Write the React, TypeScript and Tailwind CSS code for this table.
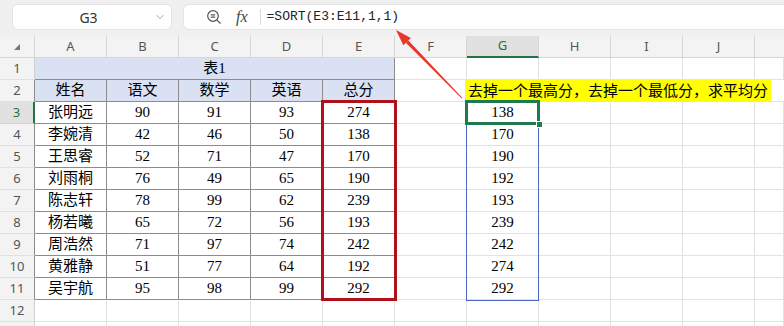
import { ChevronDown } from "lucide-react";

const data: [string, number, number, number, number][] = [
  ["张明远", 90, 91, 93, 274],
  ["李婉清", 42, 46, 50, 138],
  ["王思睿", 52, 71, 47, 170],
  ["刘雨桐", 76, 49, 65, 190],
  ["陈志轩", 78, 99, 62, 239],
  ["杨若曦", 65, 72, 56, 193],
  ["周浩然", 71, 97, 74, 242],
  ["黄雅静", 51, 77, 64, 192],
  ["吴宇航", 95, 98, 99, 292],
];

const sorted = [138, 170, 190, 192, 193, 239, 242, 274, 292];
const letters = ["A", "B", "C", "D", "E", "F", "G", "H", "I", "J"];

const light = "border-r border-b border-[#e2e2e2]";
const dark = "border-r border-b border-[#8c8c8c]";

function RowHead({ n, tone }: { n?: number; tone: "light" | "dark" | "sel" }) {
  if (tone === "sel") {
    return (
      <div className="flex items-center justify-center bg-[#e1e1e1] text-[#217346] text-[13px] font-['Noto_Sans',sans-serif] border-b border-[#d4d4d4] border-r-2 border-r-[#217346]">
        {n}
      </div>
    );
  }
  return (
    <div
      className={
        tone === "dark"
          ? "flex items-center justify-center bg-[#f3f3f3] text-[#555] text-[13px] font-['Noto_Sans',sans-serif] border-b border-[#e0e0e0] border-r border-r-[#8c8c8c]"
          : "flex items-center justify-center bg-[#f3f3f3] text-[#555] text-[13px] font-['Noto_Sans',sans-serif] border-b border-[#e0e0e0] border-r border-r-[#d0d0d0]"
      }
    >
      {n}
    </div>
  );
}

function Empty({ count }: { count: number }) {
  return (
    <>
      {Array.from({ length: count }).map((_, i) => (
        <div key={i} className={light} />
      ))}
    </>
  );
}

export default function App() {
  return (
    <div className="relative w-[784px] h-[326px] overflow-hidden bg-white font-['Liberation_Serif','Noto_Sans_CJK_SC',serif] text-black">
      {/* Toolbar */}
      <div className="h-[36px] bg-[#f0f0f0] flex items-start pt-[4px] pl-[12px] gap-[11px] font-['Noto_Sans','Noto_Sans_CJK_SC',sans-serif]">
        <div className="w-[160px] h-[26px] bg-white rounded-md border border-[#e4e4e4] flex items-center">
          <span className="flex-1 text-center text-[14px] text-[#333] pl-[10px]">G3</span>
          <ChevronDown className="w-[12px] h-[12px] text-[#888] mr-[5px]" strokeWidth={1.5} />
        </div>
        <div className="flex-1 h-[26px] bg-white rounded-l-md border border-r-0 border-[#e4e4e4] flex items-center">
          <svg width="16" height="16" viewBox="0 0 16 16" className="ml-[22px]" fill="none" stroke="#555" strokeWidth="1.2">
            <circle cx="7" cy="7" r="5.3" />
            <path d="M10.8 10.8 L14.5 14.5" />
            <path d="M4.8 5.8 H9.2 M4.8 8.2 H9.2" />
          </svg>
          <span className="ml-[14px] italic text-[16px] text-[#444] font-['Liberation_Serif',serif]">fx</span>
          <div className="ml-[12px] w-px h-[16px] bg-[#d8d8d8]" />
          <span className="ml-[6px] text-[13px] text-[#222] font-['Liberation_Mono',monospace]">=SORT(E3:E11,1,1)</span>
        </div>
      </div>

      {/* Sheet */}
      <div className="grid grid-cols-[35px_repeat(10,72px)_1fr] auto-rows-[22px]">
        {/* column headers */}
        <div className="bg-[#f3f3f3] border-r border-b border-[#d6d6d6] flex items-center justify-center">
          <svg width="8" height="8" viewBox="0 0 8 8">
            <path d="M7 1 L7 7 L1 7 Z" fill="#777" />
          </svg>
        </div>
        {letters.map((l) =>
          l === "G" ? (
            <div
              key={l}
              className="bg-[#e1e1e1] text-[#217346] text-[13px] flex items-center justify-center border-r border-[#d6d6d6] border-b-2 border-b-[#217346] font-['Noto_Sans',sans-serif]"
            >
              {l}
            </div>
          ) : (
            <div
              key={l}
              className="bg-[#f3f3f3] text-[#555] text-[13px] flex items-center justify-center border-r border-b border-[#d6d6d6] font-['Noto_Sans',sans-serif]"
            >
              {l}
            </div>
          )
        )}
        <div className="bg-[#f3f3f3] border-b border-[#d6d6d6]" />

        {/* row 1 */}
        <RowHead n={1} tone="light" />
        <div className="col-span-5 bg-[#d9e1f2] border-r border-b border-[#8c8c8c] flex items-center justify-center text-[15px]">
          表1
        </div>
        <Empty count={6} />

        {/* row 2 */}
        <RowHead n={2} tone="dark" />
        {["姓名", "语文", "数学", "英语", "总分"].map((h) => (
          <div key={h} className={`bg-[#d9e1f2] flex items-center justify-center text-[15px] ${dark}`}>
            {h}
          </div>
        ))}
        <div className={light} />
        <div className="col-span-5 border-b border-[#e2e2e2] flex">
          <div className="w-[306px] -ml-[2px] h-[22px] bg-[#ffff00] text-[15px] flex items-center pl-[3px] whitespace-nowrap">
            去掉一个最高分，去掉一个最低分，求平均分
          </div>
        </div>

        {/* data rows */}
        {data.map((r, i) => (
          <div key={r[0]} className="contents">
            <RowHead n={i + 3} tone={i === 0 ? "sel" : "dark"} />
            {r.map((v, j) => (
              <div key={j} className={`flex items-center justify-center text-[15px] ${dark}`}>
                {v}
              </div>
            ))}
            <div className={light} />
            <div className={`flex items-center justify-center text-[15px] ${light}`}>{sorted[i]}</div>
            <Empty count={4} />
          </div>
        ))}

        {/* rows 12, 13 */}
        <RowHead n={12} tone="light" />
        <Empty count={11} />
        <RowHead tone="light" />
        <Empty count={11} />
      </div>

      {/* red outline on E3:E11 */}
      <div className="absolute left-[321px] top-[100px] w-[76px] h-[201px] border-[3px] border-[#b0101a]" />

      {/* spill range G3:G11 */}
      <div className="absolute left-[466px] top-[101px] w-[73px] h-[200px] border border-[#4a68c2]" />

      {/* active cell G3 */}
      <div className="absolute left-[465px] top-[100px] w-[75px] h-[25px] border-[3px] border-[#1f7b4d]" />
      <div className="absolute left-[536px] top-[121px] w-[7px] h-[7px] bg-[#1f7b4d] border border-white" />

      {/* arrow */}
      <svg className="absolute left-0 top-0 pointer-events-none" width="784" height="326">
        <polygon points="396,30 410.9,38.0 403.3,45.2" fill="#e8382b" />
        <polygon points="408.4,40.4 405.8,42.7 461.7,98.4 462.3,97.8" fill="#e8382b" />
      </svg>
    </div>
  );
}
